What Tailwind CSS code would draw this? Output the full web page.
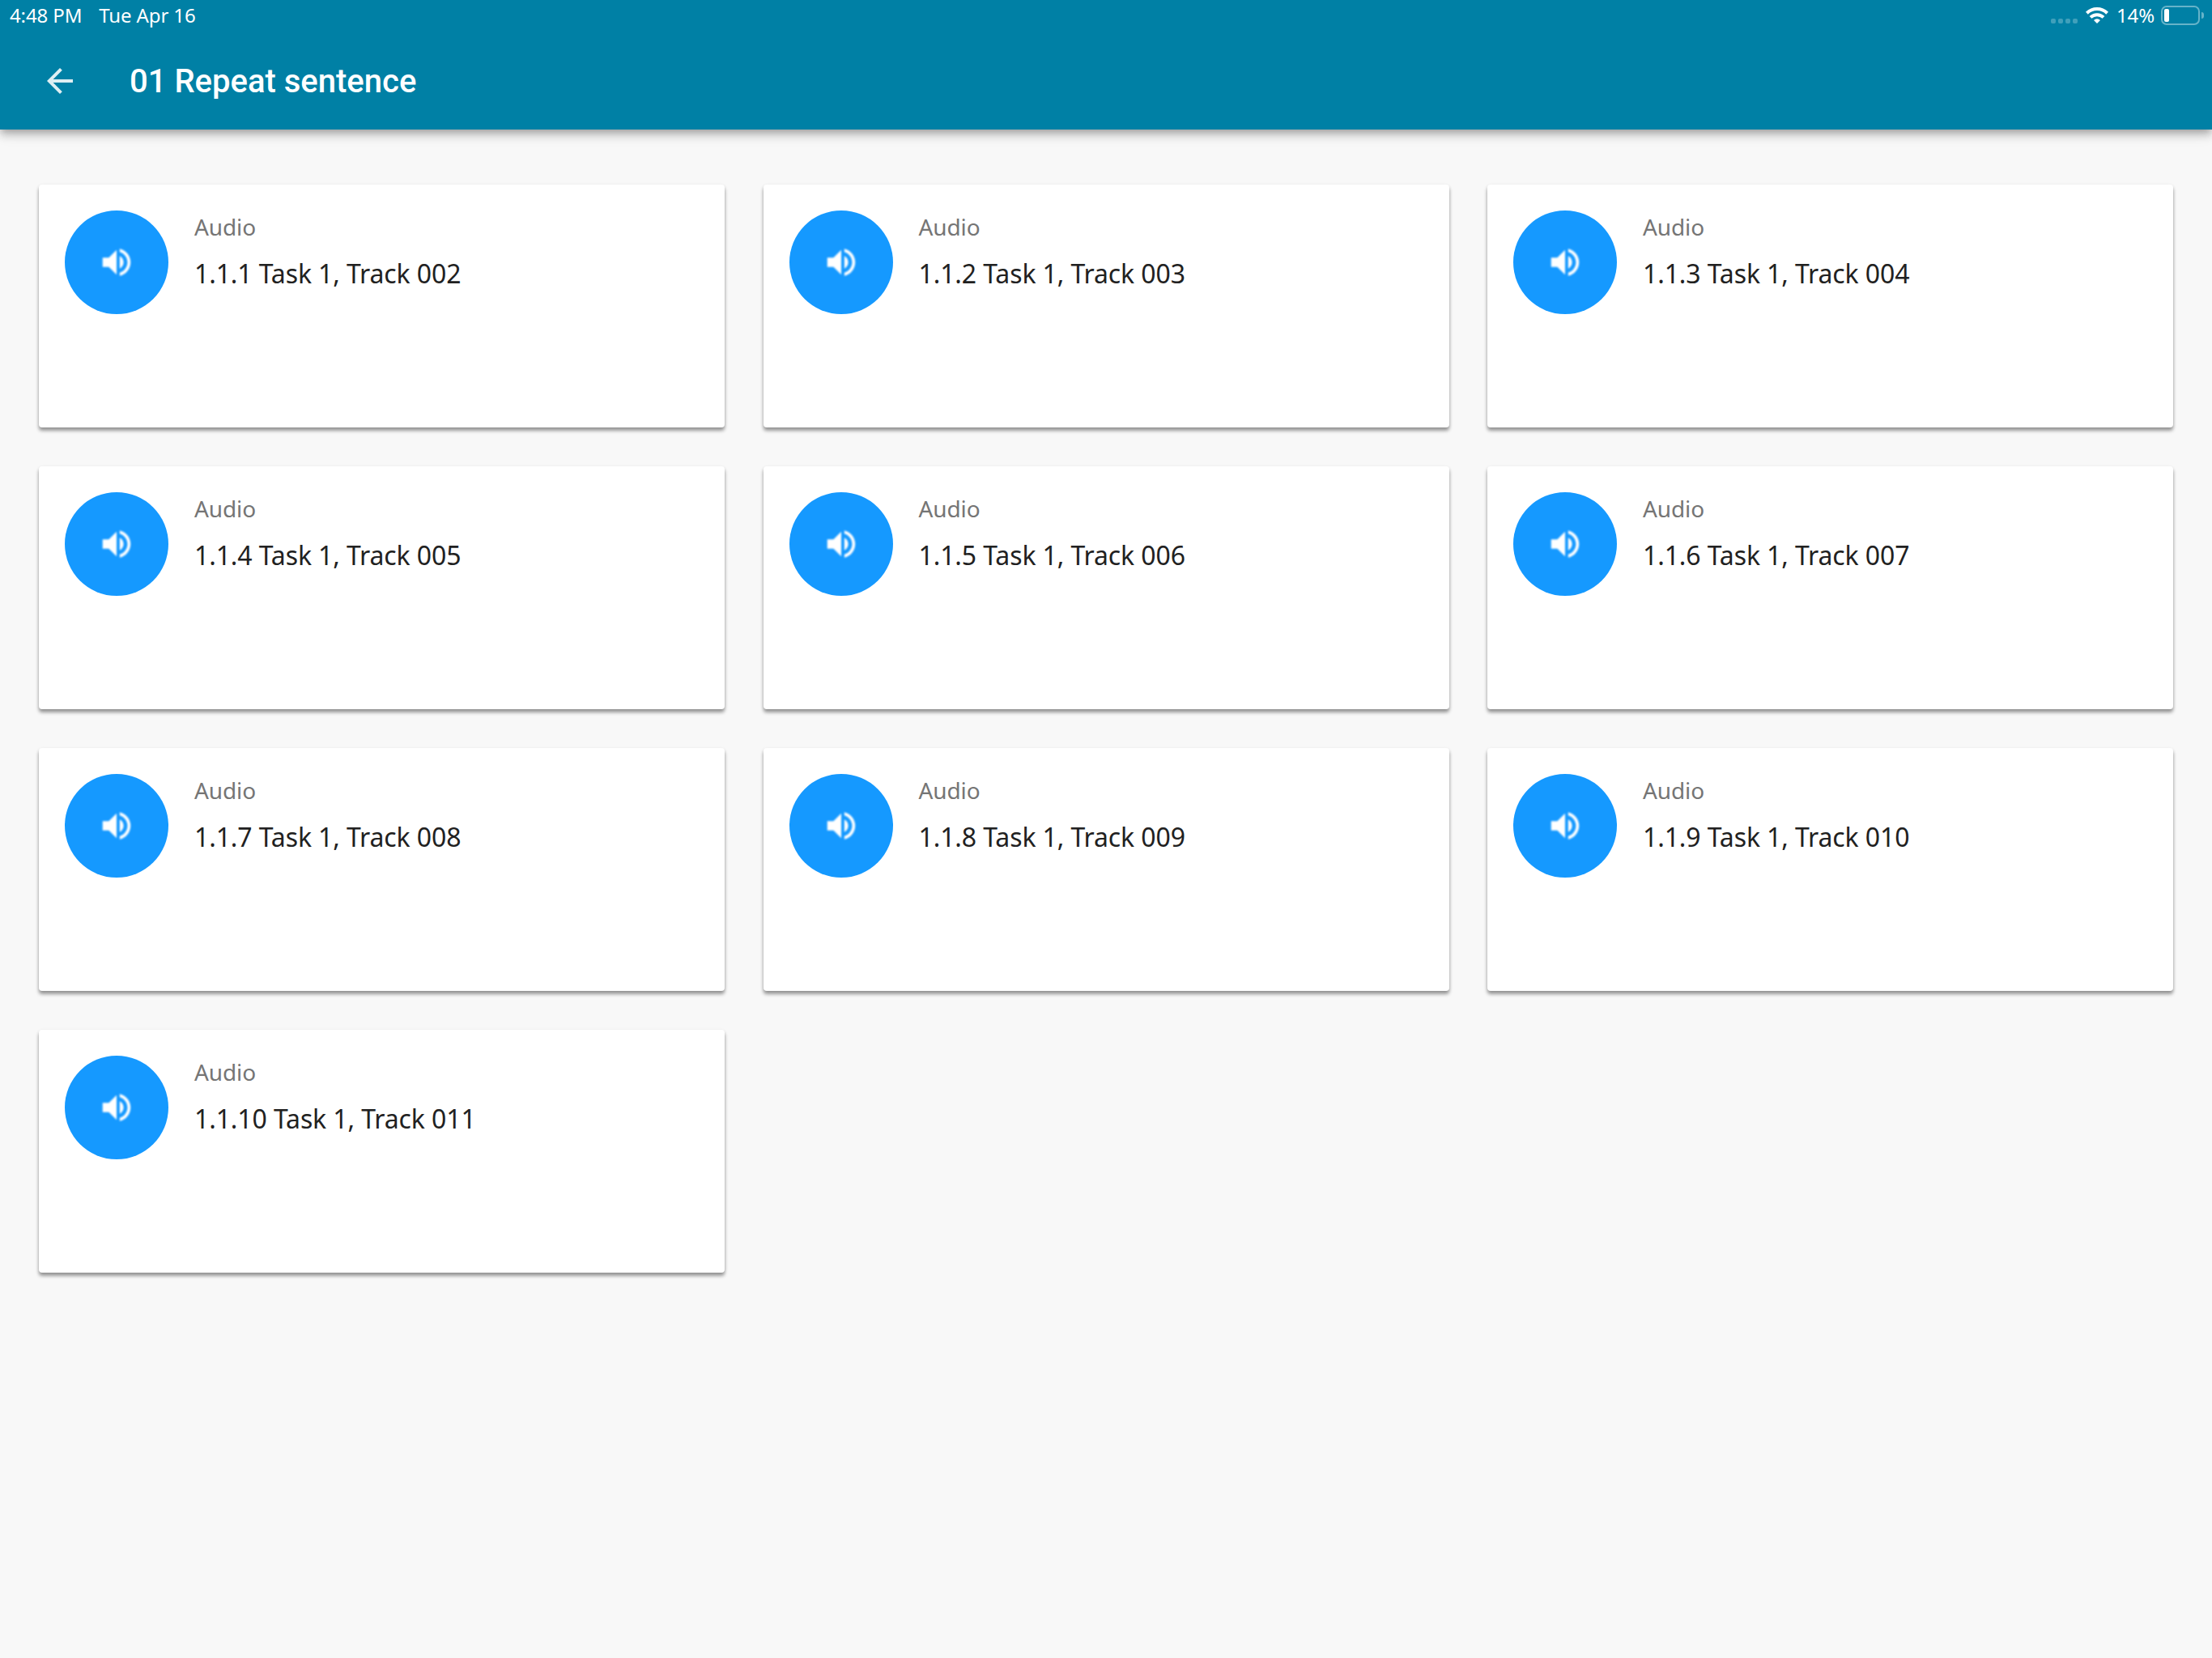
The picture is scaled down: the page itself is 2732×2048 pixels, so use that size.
<!DOCTYPE html>
<html lang="en">

<head>
    <meta charset="UTF-8">
    <meta name="viewport" content="width=device-width, initial-scale=1.0">
    <title>01 Repeat sentence</title>
    <script src="https://cdn.jsdelivr.net/npm/@tailwindcss/browser@4"></script>
</head>

<body class="min-h-screen bg-[#f8f8f8] font-['Noto_Sans',sans-serif]">
    <!-- Shared icon shapes -->
    <svg class="hidden">
        <symbol id="volume-up" viewBox="0 0 24 24">
            <path d="M3 9v6h4l5 5V4L7 9H3zm13.5 3c0-1.77-1.02-3.29-2.5-4.03v8.05c1.48-.73 2.5-2.25 2.5-4.02zM14 3.23v2.06c2.89.86 5 3.54 5 6.71s-2.11 5.85-5 6.71v2.06c4.01-.91 7-4.49 7-8.77s-2.99-7.86-7-8.77z" />
        </symbol>
    </svg>

    <header class="relative h-40 bg-[#0080a5] text-white shadow-[0_4px_8px_-2px_rgba(0,0,0,0.2),0_8px_10px_0_rgba(0,0,0,0.14),0_2px_20px_0_rgba(0,0,0,0.12)]">
        <!-- Status bar -->
        <div class="flex h-[38px] items-center justify-between pl-3 pr-[10px] text-[24px] leading-[38px] tracking-[-0.12px]">
            <div class="flex gap-[21px]">
                <span>4:48 PM</span>
                <span>Tue Apr 16</span>
            </div>
            <div class="flex items-center">
                <div class="mr-[10px] mt-[14px] flex gap-[3px]">
                    <span class="size-[6px] rounded-[2px] bg-white/25"></span>
                    <span class="size-[6px] rounded-[2px] bg-white/25"></span>
                    <span class="size-[6px] rounded-[2px] bg-white/25"></span>
                    <span class="size-[6px] rounded-[2px] bg-white/25"></span>
                </div>
                <svg class="mr-[10px] h-5 w-7" viewBox="0 0 28 20" fill="none" stroke="#fff" stroke-width="4">
                    <path d="M1.4 7.2a18 18 0 0 1 25.2 0" />
                    <path d="M6 12.4a11.5 11.5 0 0 1 16 0" />
                    <path d="M14 20l-4-4.1a6 6 0 0 1 8 0z" fill="#fff" stroke="none" />
                </svg>
                <span>14%</span>
                <div class="ml-2 h-6 w-12 rounded-[7px] border-2 border-white/40 p-[2px]">
                    <div class="h-4 w-[6px] rounded-[2px] bg-white"></div>
                </div>
                <div class="ml-[2px] h-2 w-[3px] rounded-r-full bg-white/40"></div>
            </div>
        </div>

        <!-- Toolbar -->
        <div class="flex h-[124px] items-center pl-[50px]">
            <svg class="size-12 fill-white/87" viewBox="0 0 24 24">
                <path d="M20 11H7.83l5.59-5.59L12 4l-8 8 8 8 1.41-1.41L7.83 13H20v-2z" />
            </svg>
            <h1 class="ml-[62px] pt-[2px] font-[Roboto,sans-serif] text-[40px] font-medium">01 Repeat sentence</h1>
        </div>
    </header>

    <main id="tracks" class="grid grid-cols-[repeat(3,847px)] justify-between gap-y-12 px-12 pt-[68px]"></main>

    <template id="track-card">
        <article class="flex h-[300px] gap-8 rounded-[4px] bg-white p-8 shadow-[0_4px_4px_0_rgba(0,0,0,0.38),0_1px_4px_0_rgba(0,0,0,0.08)]">
            <div class="flex size-32 items-center justify-center rounded-full bg-[#1599ff]">
                <svg class="size-[46px] fill-white blur-[1px]"><use href="#volume-up" /></svg>
            </div>
            <div>
                <p class="mt-px text-[28px] leading-[38px] tracking-[-0.1px] text-[#757575]">Audio</p>
                <h2 class="mt-[17px] text-[32px] leading-[44px] tracking-[-0.11px] text-[#212121]"></h2>
            </div>
        </article>
    </template>

    <script>
        const list = document.getElementById('tracks');
        const card = document.getElementById('track-card');

        for (let i = 1; i <= 10; i++) {
            const item = card.content.cloneNode(true);
            const track = String(i + 1).padStart(3, '0');
            item.querySelector('h2').textContent = `1.1.${i} Task 1, Track ${track}`;
            list.appendChild(item);
        }
    </script>
</body>

</html>
